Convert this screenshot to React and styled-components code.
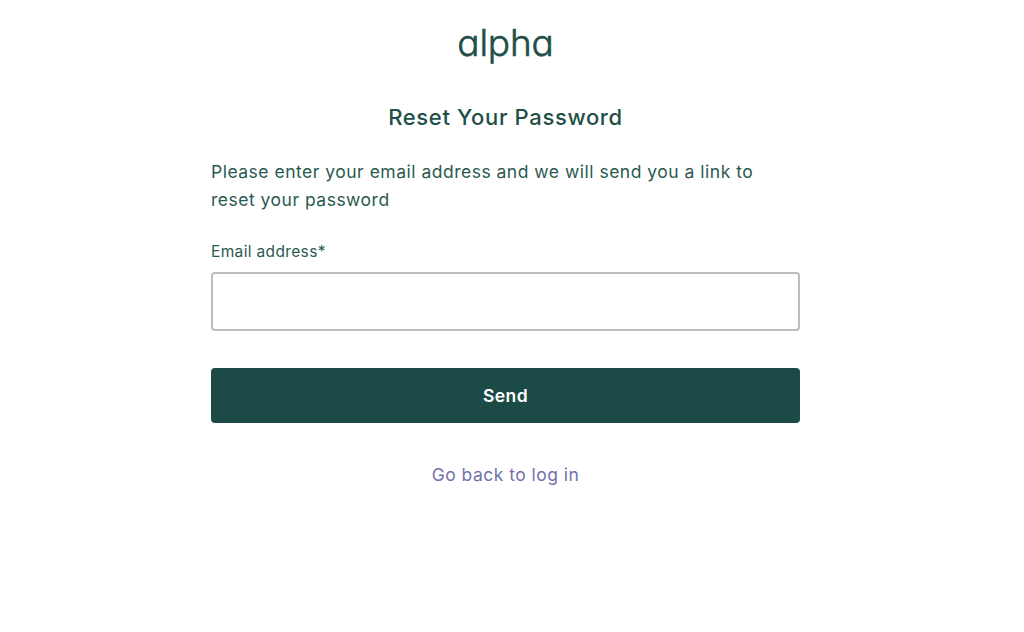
import React from 'react';
import styled, { createGlobalStyle } from 'styled-components';

const GlobalStyle = createGlobalStyle`
  html, body {
    margin: 0;
    padding: 0;
    background: #ffffff;
  }
`;

const Page = styled.div`
  min-height: 632px;
  box-sizing: border-box;
  padding: 22px 13px 0 0;
  display: flex;
  flex-direction: column;
  align-items: center;
  font-family: Inter, "Open Sans", sans-serif;
  color: #2a5a50;
`;

const Logo = styled.div`
  font-family: Inter, sans-serif;
  font-feature-settings: 'cv11' 1;
  font-size: 37px;
  font-weight: 300;
  line-height: 42px;
  letter-spacing: -0.2px;
  color: #1f4f47;
  -webkit-text-stroke: 0.6px #1f4f47;
`;

const Card = styled.main`
  width: 589px;
  margin-top: 38px;
  display: flex;
  flex-direction: column;
`;

const Title = styled.h1`
  margin: 0;
  font-size: 22px;
  line-height: 30px;
  font-weight: 500;
  text-align: center;
  letter-spacing: 0.65px;
  color: #1f4f47;
`;

const Intro = styled.p`
  margin: 26px 0 0;
  font-size: 17.5px;
  line-height: 28px;
  font-weight: 400;
  letter-spacing: 0.5px;
`;

const Label = styled.label`
  display: block;
  margin-top: 28px;
  font-size: 15.5px;
  line-height: 20px;
  letter-spacing: 0.35px;
`;

const EmailInput = styled.input`
  display: block;
  width: 100%;
  height: 59px;
  margin-top: 10px;
  box-sizing: border-box;
  background: #fff;
  border: 2px solid #bdbdbd;
  border-radius: 4px;
  outline: none;
`;

const SendButton = styled.button`
  width: 100%;
  height: 55px;
  margin-top: 37px;
  border: none;
  border-radius: 4px;
  background: #1c4b47;
  color: #fff;
  font-family: inherit;
  font-size: 17.5px;
  font-weight: 600;
  letter-spacing: 0.4px;
  cursor: pointer;
`;

const BackLink = styled.a`
  margin-top: 41px;
  text-align: center;
  font-size: 17.5px;
  line-height: 22px;
  letter-spacing: 0.47px;
  color: #7272ab;
  text-decoration: none;
`;

export default function App() {
  return (
    <Page>
      <GlobalStyle />
      <Logo>alpha</Logo>
      <Card>
        <Title>Reset Your Password</Title>
        <Intro>
          Please enter your email address and we will send you a link to
          <br />
          reset your password
        </Intro>
        <Label htmlFor="email">Email address*</Label>
        <EmailInput id="email" type="email" />
        <SendButton type="button">Send</SendButton>
        <BackLink href="#">Go back to log in</BackLink>
      </Card>
    </Page>
  );
}
